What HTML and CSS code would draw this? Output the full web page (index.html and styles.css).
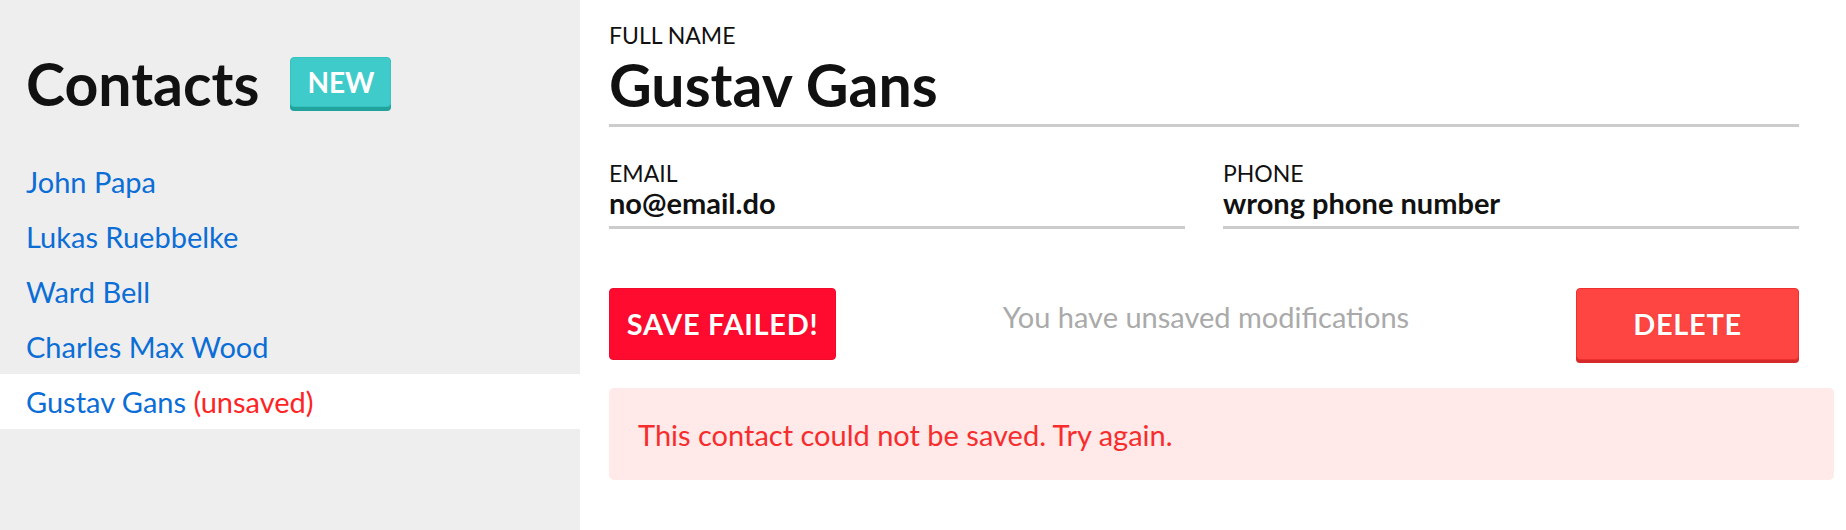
FILE: index.html
```html
<!DOCTYPE html>
<html lang="en">
<head>
<meta charset="utf-8">
<title>Contacts</title>
<link rel="stylesheet" href="styles.css">
</head>
<body>
<div class="app">
  <aside class="sidebar">
    <div class="sidebar-head">
      <h1 class="title">Contacts</h1>
      <button class="badge">NEW</button>
    </div>
    <ul class="contact-list">
      <li class="contact"><a class="contact-link">John Papa</a></li>
      <li class="contact"><a class="contact-link">Lukas Ruebbelke</a></li>
      <li class="contact"><a class="contact-link">Ward Bell</a></li>
      <li class="contact"><a class="contact-link">Charles Max Wood</a></li>
      <li class="contact active"><a class="contact-link">Gustav Gans</a> <span class="unsaved">(unsaved)</span></li>
    </ul>
  </aside>
  <main class="detail">
    <div class="form">
      <div class="field field-name">
        <label class="field-label">FULL NAME</label>
        <div class="field-value">Gustav Gans</div>
      </div>
      <div class="field-row">
        <div class="field">
          <label class="field-label">EMAIL</label>
          <div class="field-value">no@email.do</div>
        </div>
        <div class="field">
          <label class="field-label">PHONE</label>
          <div class="field-value">wrong phone number</div>
        </div>
      </div>
      <div class="actions">
        <button class="btn btn-save">SAVE FAILED!</button>
        <span class="status">You have unsaved modifications</span>
        <button class="btn btn-delete">DELETE</button>
      </div>
    </div>
    <div class="alert">This contact could not be saved. Try again.</div>
  </main>
</div>
</body>
</html>
```

FILE: styles.css
```css
* { box-sizing: border-box; }

html, body {
  margin: 0;
  padding: 0;
  height: 100%;
}

body {
  font-family: Lato, "Open Sans", sans-serif;
  color: #111;
  background: #fff;
}

.app {
  display: flex;
  height: 530px;
}

/* Sidebar */
.sidebar {
  width: 580px;
  flex: none;
  background: #eeeeee;
  padding-top: 49px;
}

.sidebar-head {
  display: flex;
  align-items: flex-start;
  gap: 31px;
  padding-left: 26px;
  margin-bottom: 35px;
}

.title {
  margin: 0;
  font-size: 59px;
  font-weight: 700;
  line-height: 70px;
  color: #111;
}

.badge {
  margin-top: 8px;
  height: 50px;
  line-height: 48px;
  padding: 0 16px;
  border: 1px solid #35c3c0;
  border-radius: 4px;
  background: #3fcbca;
  box-shadow: 0 4px 0 #22a29d;
  color: #fff;
  font-family: Lato, sans-serif;
  font-size: 28px;
  font-weight: 700;
}

.contact-list {
  list-style: none;
  margin: 0;
  padding: 0;
}

.contact {
  height: 55px;
  line-height: 55px;
  padding-left: 26px;
  font-size: 29px;
}

.contact.active {
  background: #fff;
}

.contact-link {
  color: #0b6dd6;
}

.unsaved {
  color: #ff2424;
}

/* Detail */
.detail {
  flex: 1;
  padding: 23px 12px 0 29px;
}

.form {
  margin-right: 35px;
}

.field-label {
  display: block;
  font-size: 23px;
  line-height: 24px;
  color: #111;
}

.field-value {
  font-weight: 700;
  font-size: 29px;
  line-height: 36px;
  padding-bottom: 5px;
  border-bottom: 3px solid #cccccc;
  color: #111;
}

.field-name .field-value {
  font-size: 59px;
  line-height: 76px;
  padding-bottom: 1px;
}

.field-row {
  display: grid;
  grid-template-columns: 1fr 1fr;
  gap: 38px;
  margin-top: 34px;
}

.actions {
  display: flex;
  justify-content: space-between;
  align-items: flex-start;
  margin-top: 59px;
}

.btn {
  height: 72px;
  border-radius: 4px;
  color: #fff;
  font-family: Lato, sans-serif;
  font-size: 29px;
  font-weight: 700;
  line-height: 70px;
  letter-spacing: 0.7px;
  padding: 0;
  text-shadow: 0 0 1px rgba(160, 0, 0, 0.5);
}

.btn-save {
  width: 227px;
  background: #ff0b30;
  border: 1px solid #f00a2c;
}

.btn-delete {
  width: 223px;
  background: #ff4542;
  border: 1px solid #ee2f2f;
  box-shadow: 0 3px 0 #d42a2a;
}

.status {
  margin-top: 12px;
  font-size: 29px;
  line-height: 34px;
  color: #aaaaaa;
}

.alert {
  margin-top: 28px;
  padding: 30px 29px 28px;
  border-radius: 5px;
  background: #ffe9e9;
  color: #f72d2d;
  font-size: 29px;
  line-height: 34px;
}
```
